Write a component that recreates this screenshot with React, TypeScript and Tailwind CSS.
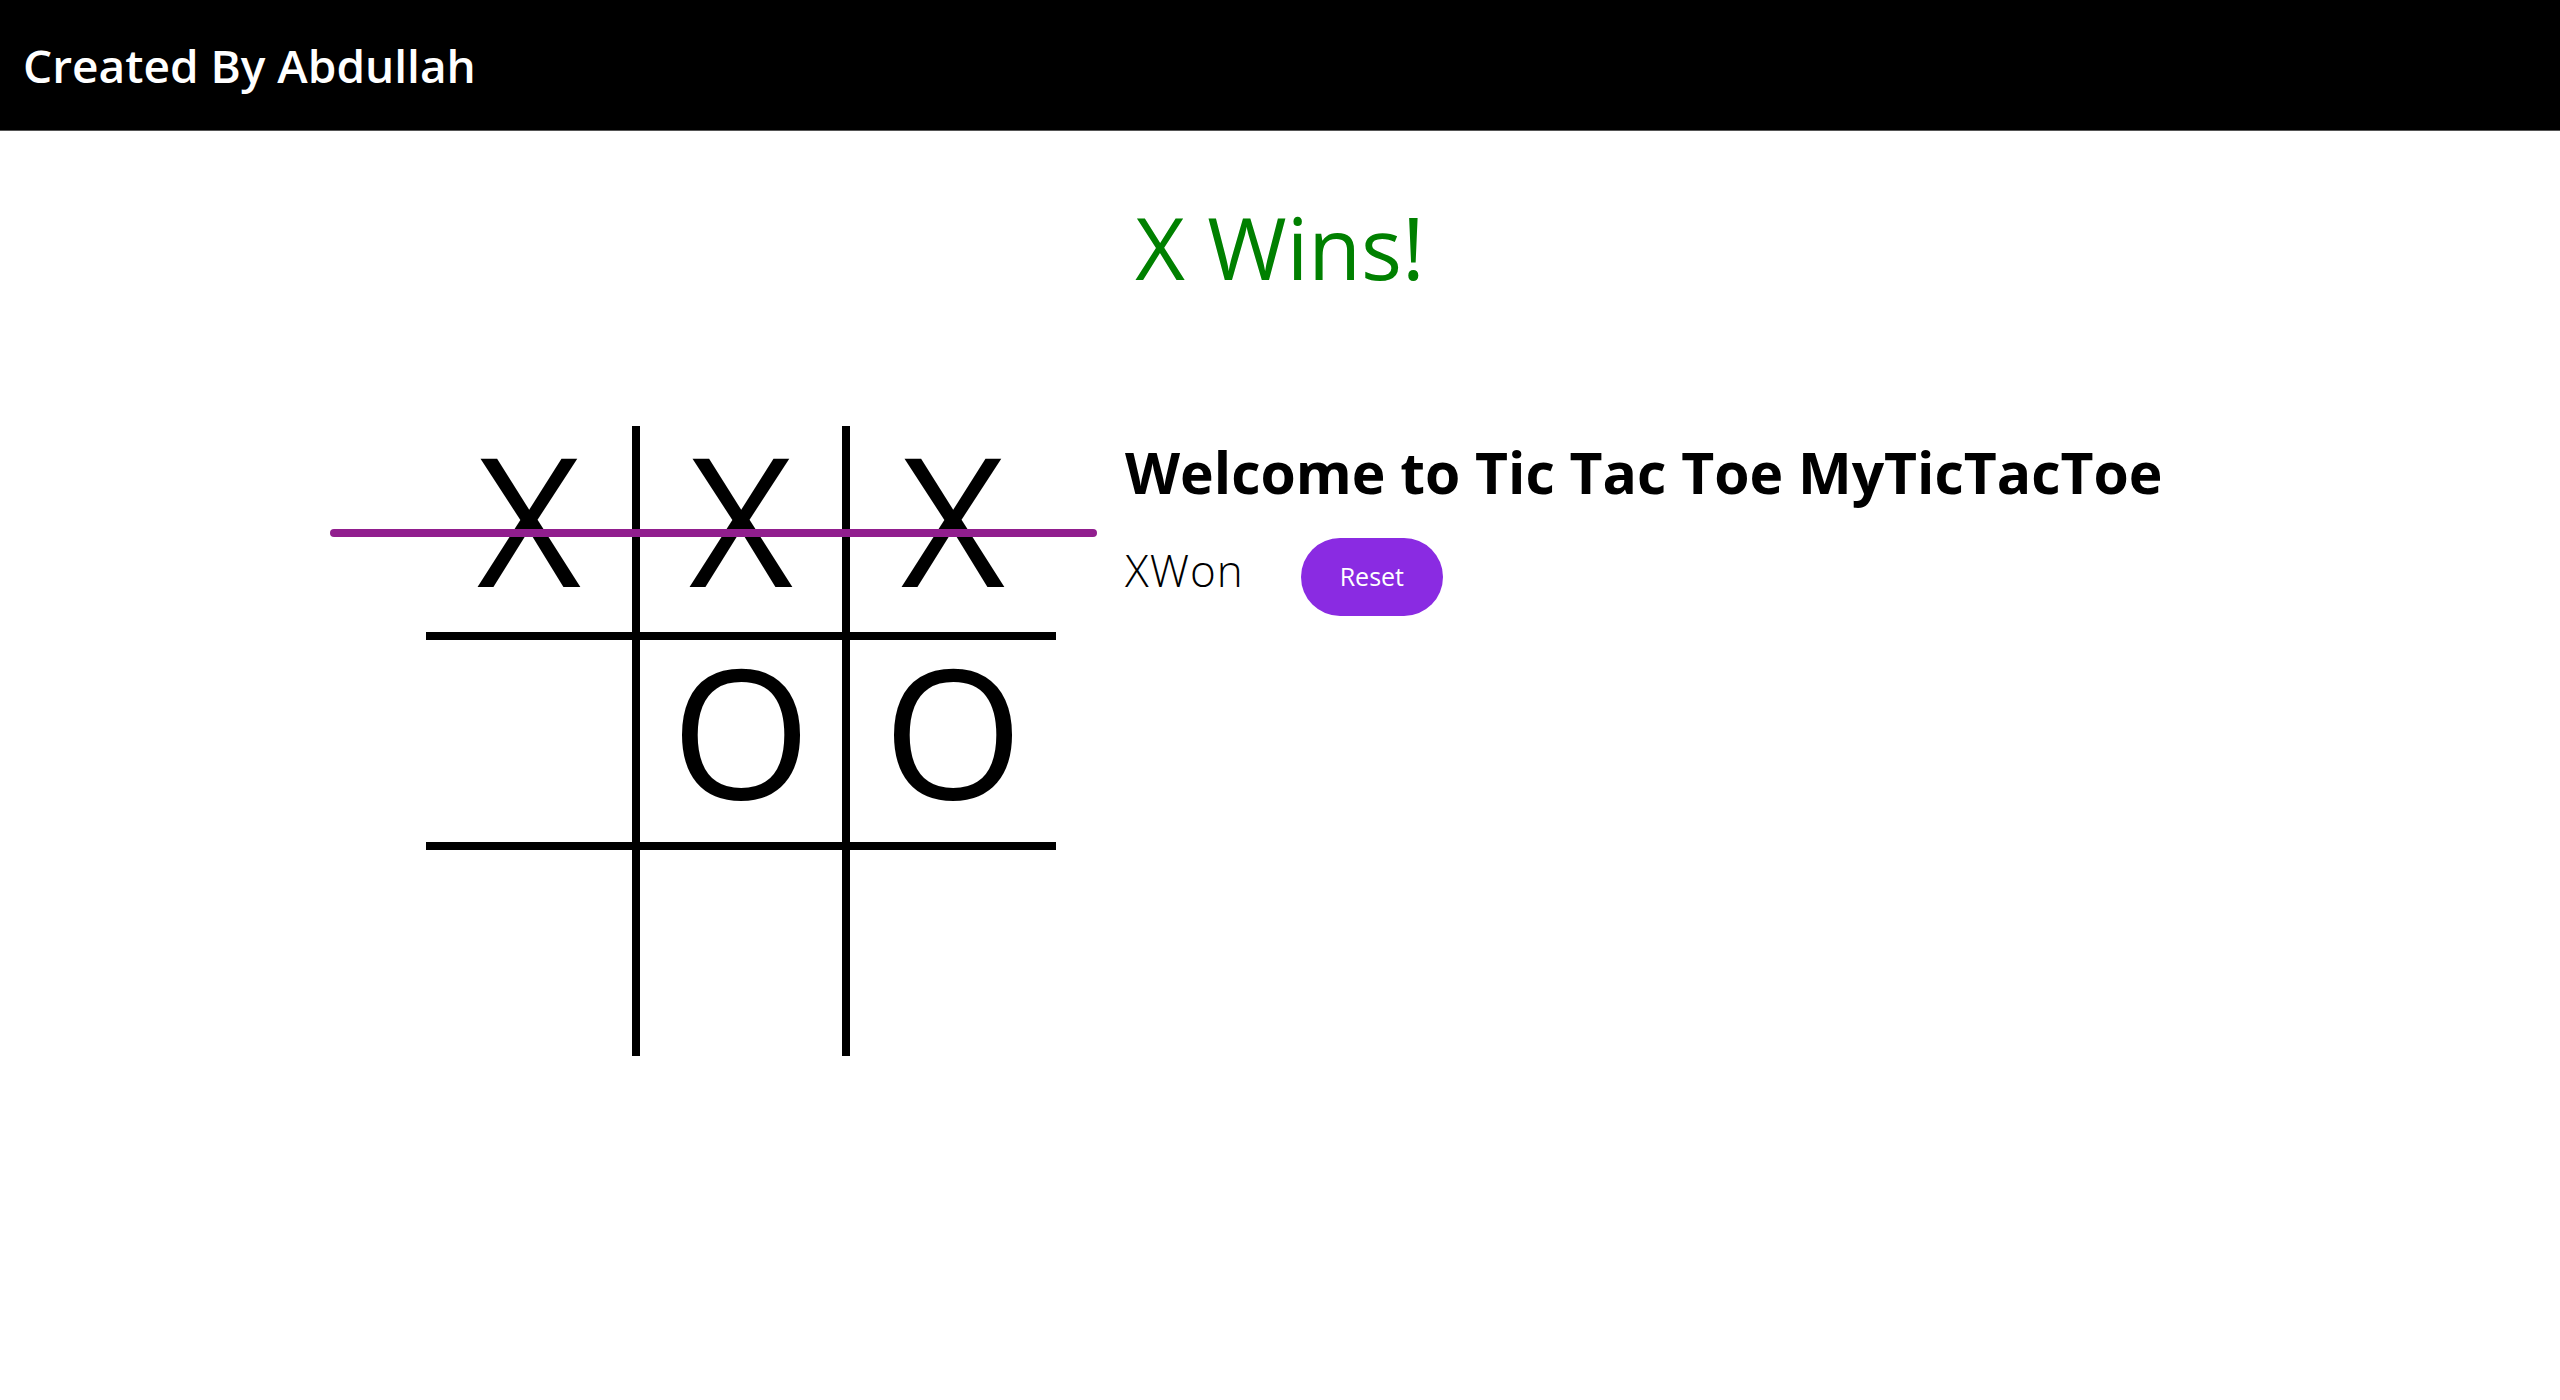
import React from "react";

const board = ["X", "X", "X", "", "O", "O", "", "", ""];

const cellBorder = [
  "border-r-4 border-b-4",
  "border-x-4 border-b-4",
  "border-l-4 border-b-4",
  "border-r-4 border-y-4",
  "border-4",
  "border-l-4 border-y-4",
  "border-r-4 border-t-4",
  "border-x-4 border-t-4",
  "border-l-4 border-t-4",
];

const App = () => {
  return (
    <div className="min-h-screen bg-white font-['Open_Sans',sans-serif]">
      <header className="h-[131px] bg-black border-b border-[#555] flex items-center px-[23px]">
        <h1 className="text-white text-[46px] font-semibold">
          Created By Abdullah
        </h1>
      </header>

      <h2 className="text-center text-[#008000] text-[86px] font-normal leading-none mt-[73px]">
        X Wins!
      </h2>

      <div className="flex items-start mt-[136px] pl-[426px]">
        <div className="relative grid grid-cols-3 grid-rows-3 w-[630px] h-[630px]">
          {board.map((v, i) => (
            <div
              key={i}
              className={`${cellBorder[i]} border-black flex items-center justify-center text-[180px] leading-[150px] pb-[22px]`}
            >
              {v}
            </div>
          ))}
          <div className="absolute left-[-96px] top-[103px] w-[767px] h-[8px] rounded-full bg-[#911e8e]" />
        </div>

        <div className="ml-[69px] pt-[11px]">
          <h3 className="text-[57px] font-bold leading-tight text-black">
            Welcome to Tic Tac Toe MyTicTacToe
          </h3>
          <div className="flex items-center gap-[57px] mt-[29px]">
            <span className="text-[44px] font-light tracking-[1px] pb-[13px]">XWon</span>
            <button className="h-[78px] px-[39px] rounded-full bg-[#8a2be2] text-white text-[25px] font-medium">
              Reset
            </button>
          </div>
        </div>
      </div>
    </div>
  );
};

export default App;
